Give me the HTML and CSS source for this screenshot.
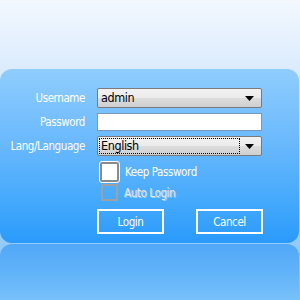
FILE: index.html
```html
<!DOCTYPE html>
<html lang="en">
<head>
    <meta charset="UTF-8">
    <title>Login</title>
    <link rel="stylesheet" href="styles.css">
</head>
<body>
<div class="sky"></div>
<div class="panel">
    <div class="form">
        <label class="label">Username</label>
        <div class="combo">
            <span>admin</span>
            <svg class="arrow" width="9" height="5" viewBox="0 0 9 5"><path d="M0 0h9L4.5 5z" fill="#000"/></svg>
        </div>

        <label class="label">Password</label>
        <input class="text-input" type="password">

        <label class="label">Lang/Language</label>
        <div class="combo">
            <span class="focus">English</span>
            <svg class="arrow" width="9" height="5" viewBox="0 0 9 5"><path d="M0 0h9L4.5 5z" fill="#000"/></svg>
        </div>

        <div class="checks">
            <div class="check-row">
                <span class="box box-active"></span>
                <span>Keep Password</span>
            </div>
            <div class="check-row muted">
                <span class="box"></span>
                <span>Auto Login</span>
            </div>
        </div>

        <div class="buttons">
            <button class="btn">Login</button>
            <button class="btn">Cancel</button>
        </div>
    </div>
</div>
<div class="reflection"></div>
</body>
</html>
```

FILE: styles.css
```css
html, body {
    margin: 0;
    height: 300px;
    overflow: hidden;
}
body {
    font-family: "DejaVu Sans Condensed", "Liberation Sans", Arial, sans-serif;
    font-size: 11.5px;
    letter-spacing: -0.4px;
    background: linear-gradient(#f3f8fe, #dbebfd 69px, #7cc0fb 300px);
}
.sky {
    height: 69px;
}
.panel {
    height: 174px;
    margin: 0 1px 0 0;
    border-radius: 12px;
    background: linear-gradient(#8fcdfd, #6cbafd 40%, #46aafc 75%, #2a9afb);
    box-sizing: border-box;
    padding-top: 19px;
}
.form {
    display: grid;
    grid-template-columns: 85px 165px;
    column-gap: 12px;
    row-gap: 5px;
    align-items: center;
}
.label {
    text-align: right;
    color: #fff;
}
.combo {
    height: 20px;
    box-sizing: border-box;
    border: 1px solid #7a7a7a;
    border-radius: 2px;
    background: linear-gradient(#f2f2f2, #ebebeb 50%, #dddddd 51%, #cfcfcf);
    display: flex;
    align-items: center;
    justify-content: space-between;
    padding: 0 7px 0 2px;
    color: #000;
    font-size: 12.5px;
}
.combo span {
    line-height: 14px;
    padding: 0 1px;
}
.combo .focus {
    outline: 1px dotted #000;
    outline-offset: 0;
    width: 139px;
    box-sizing: border-box;
}
.text-input {
    height: 18px;
    margin: 0;
    box-sizing: border-box;
    border: 1px solid #7b96c0;
    background: #fff;
    width: 165px;
}
.checks {
    grid-column: 2;
    display: flex;
    flex-direction: column;
    gap: 2px;
    padding-left: 3px;
    margin-top: 1px;
    color: #fff;
}
.check-row {
    display: flex;
    align-items: center;
    gap: 6px;
}
.box {
    width: 19px;
    height: 20px;
    box-sizing: border-box;
    border: 2px solid #8a8a8a;
    border-radius: 2px;
}
.box-active {
    background: #fff;
    box-shadow: inset 0 0 0 1px #fff;
    outline: 1px solid #fff;
}
.muted .box {
    width: 17px;
    height: 17px;
    margin-left: 1px;
    border-color: #a0a0a0;
    border-radius: 0;
}
.muted span:last-child {
    color: #e6e6e6;
    text-shadow: 1px 1px 0 #9ccff5;
}
.buttons {
    grid-column: 2;
    display: flex;
    justify-content: space-between;
    margin-top: 3px;
}
.btn {
    width: 67px;
    height: 25px;
    background: transparent;
    border: 2px solid #fff;
    color: #fff;
    font-family: inherit;
    font-size: 11.5px;
    letter-spacing: -0.4px;
}
.btn:last-child {
    margin-right: -1px;
}
.reflection {
    height: 56px;
    margin: 1px 1px 0 0;
    border-radius: 12px 12px 0 0;
    background: linear-gradient(#52a8f8, #60b3f9 50%, #78c0fa);
}
```
